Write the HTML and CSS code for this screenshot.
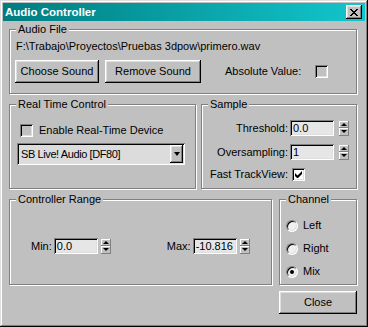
FILE: index.html
```html
<!DOCTYPE html>
<html lang="en">
<head>
    <meta charset="UTF-8">
    <title>Audio Controller</title>
    <link rel="stylesheet" href="styles.css">
</head>
<body>

    <div class="window">
        <div class="titlebar">
            <span class="title">Audio Controller</span>
            <div class="title-close">
                <svg width="8" height="7" viewBox="0 0 8 7"><path d="M0 0h2v1h1v1h2v-1h1v-1h2v1h-1v1h-1v1h-1v1h1v1h1v1h1v1h-2v-1h-1v-1h-2v1h-1v1h-2v-1h1v-1h1v-1h1v-1h-1v-1h-1v-1h-1z" fill="#000"/></svg>
            </div>
        </div>

        <div class="content">

            <div class="group audio">
                <div class="legend">Audio File</div>
                <div class="path">F:\Trabajo\Proyectos\Pruebas 3dpow\primero.wav</div>
                <div class="btn-row">
                    <div class="btn btn-choose">Choose Sound</div>
                    <div class="btn btn-remove">Remove Sound</div>
                    <span class="abs-label">Absolute Value:</span>
                    <span class="check disabled"></span>
                </div>
            </div>

            <div class="row-mid">
                <div class="group rtc">
                    <div class="legend">Real Time Control</div>
                    <div class="check-row">
                        <span class="check disabled"></span>
                        <span>Enable Real-Time Device</span>
                    </div>
                    <div class="select">
                        <span class="select-text">SB Live! Audio [DF80]</span>
                        <span class="select-arrow"><span class="tri-down"></span></span>
                    </div>
                </div>

                <div class="group sample">
                    <div class="legend">Sample</div>
                    <div class="form">
                        <span class="lbl">Threshold:</span>
                        <span class="field">0.0</span>
                        <span class="spin"><span class="spin-up"><span class="tri-up"></span></span><span class="spin-down"><span class="tri-down"></span></span></span>

                        <span class="lbl">Oversampling:</span>
                        <span class="field">1</span>
                        <span class="spin"><span class="spin-up"><span class="tri-up"></span></span><span class="spin-down"><span class="tri-down"></span></span></span>

                        <span class="lbl">Fast TrackView:</span>
                        <span class="check checked">
                            <svg width="9" height="9" viewBox="0 0 9 9"><path d="M1 3v3l2 2h1l4-4v-3l-4.5 4.5z" fill="#000"/></svg>
                        </span>
                    </div>
                </div>
            </div>

            <div class="row-bottom">
                <div class="group range">
                    <div class="legend">Controller Range</div>
                    <div class="range-row">
                        <span class="lbl-min">Min:</span>
                        <span class="field">0.0</span>
                        <span class="spin"><span class="spin-up"><span class="tri-up"></span></span><span class="spin-down"><span class="tri-down"></span></span></span>

                        <span class="lbl-max">Max:</span>
                        <span class="field">-10.816</span>
                        <span class="spin"><span class="spin-up"><span class="tri-up"></span></span><span class="spin-down"><span class="tri-down"></span></span></span>
                    </div>
                </div>

                <div class="side">
                    <div class="group channel">
                        <div class="legend">Channel</div>
                        <div class="radio-list">
                            <div class="radio-row"><span class="radio"></span><span>Left</span></div>
                            <div class="radio-row"><span class="radio"></span><span>Right</span></div>
                            <div class="radio-row"><span class="radio on"></span><span>Mix</span></div>
                        </div>
                    </div>
                    <div class="btn btn-close">Close</div>
                </div>
            </div>

        </div>
    </div>

</body>
</html>
```

FILE: styles.css
```css
*{
    box-sizing: border-box;
}
html, body{
    margin: 0;
    padding: 0;
    background: #c0c0c0;
}
body{
    font-family: 'Liberation Sans', Arial, sans-serif;
    font-size: 11px;
    line-height: 13px;
    color: #000;
}

.window{
    width: 368px;
    height: 327px;
    padding: 3px;
    background: #c0c0c0;
    box-shadow: inset -1px -1px 0 #000, inset 1px 1px 0 #dfdfdf, inset -2px -2px 0 #808080, inset 2px 2px 0 #fff;
}

/* title bar */
.titlebar{
    height: 18px;
    display: flex;
    align-items: center;
    justify-content: space-between;
    padding: 0 3px 0 2px;
    background: linear-gradient(to right, #007c80, #12c6cc);
}
.title{
    color: #fff;
    font-weight: bold;
    font-size: 11.5px;
}
.title-close{
    width: 16px;
    height: 14px;
    display: flex;
    align-items: center;
    justify-content: center;
    background: #c0c0c0;
    box-shadow: inset -1px -1px 0 #000, inset 1px 1px 0 #fff, inset -2px -2px 0 #808080, inset 2px 2px 0 #dfdfdf;
}

.content{
    padding: 8px 8px 0 6px;
}

/* group boxes */
.group{
    border: 1px solid #808080;
    box-shadow: 1px 1px 0 #fff, inset 1px 1px 0 #fff;
    padding: 0 5px;
}
.legend{
    display: table;
    margin: -7px 0 0 1px;
    padding: 0 2px;
    background: #c0c0c0;
}

.audio{
    height: 65px;
}
.path{
    margin: 4px 0 0 1px;
}
.btn-row{
    display: flex;
    align-items: center;
    margin-top: 7px;
}

.btn{
    height: 23px;
    display: flex;
    align-items: center;
    justify-content: center;
    background: #c0c0c0;
    box-shadow: inset -1px -1px 0 #000, inset 1px 1px 0 #fff, inset -2px -2px 0 #808080, inset 2px 2px 0 #dfdfdf;
}
.btn-choose{
    width: 84px;
}
.btn-remove{
    width: 96px;
    margin-left: 6px;
}
.abs-label{
    margin-left: 24px;
}
.btn-row .check{
    margin-left: 14px;
}

/* check boxes and fields */
.check{
    width: 13px;
    height: 13px;
    display: inline-flex;
    align-items: center;
    justify-content: center;
    background: #fff;
    box-shadow: inset 1px 1px 0 #808080, inset -1px -1px 0 #fff, inset 2px 2px 0 #000, inset -2px -2px 0 #dfdfdf;
}
.check.disabled{
    background: #c0c0c0;
}

.field{
    height: 16px;
    width: 44px;
    padding: 2px 0 0 3px;
    background: #e6e6e6;
    box-shadow: inset 1px 1px 0 #808080, inset -1px -1px 0 #fff, inset 2px 2px 0 #000, inset -2px -2px 0 #dfdfdf;
}

.spin{
    width: 10px;
    height: 15px;
    display: flex;
    flex-direction: column;
    margin-left: 3px;
}
.spin-up, .spin-down{
    height: 7px;
    display: flex;
    align-items: center;
    justify-content: center;
    background: #c0c0c0;
    box-shadow: inset -1px -1px 0 #808080, inset 1px 1px 0 #fff;
}
.spin-down{
    height: 8px;
}
.tri-up{
    border-left: 3px solid transparent;
    border-right: 3px solid transparent;
    border-bottom: 3px solid #000;
}
.tri-down{
    border-left: 3px solid transparent;
    border-right: 3px solid transparent;
    border-top: 3px solid #000;
}

/* middle row */
.row-mid{
    display: grid;
    grid-template-columns: 187px 156px;
    column-gap: 5px;
    margin-top: 10px;
}
.rtc, .sample{
    height: 85px;
}
.check-row{
    display: flex;
    align-items: center;
    gap: 6px;
    margin: 13px 0 0 5px;
}
.select{
    display: flex;
    align-items: center;
    justify-content: space-between;
    width: 168px;
    height: 22px;
    margin: 6px 0 0 2px;
    padding: 0 2px 0 4px;
    background: #dcdcdc;
    box-shadow: inset 1px 1px 0 #808080, inset -1px -1px 0 #fff, inset 2px 2px 0 #000, inset -2px -2px 0 #dfdfdf;
    letter-spacing: -0.4px;
}
.select-arrow{
    width: 13px;
    height: 18px;
    display: flex;
    align-items: center;
    justify-content: center;
    background: #c0c0c0;
    box-shadow: inset -1px -1px 0 #000, inset 1px 1px 0 #fff, inset -2px -2px 0 #808080, inset 2px 2px 0 #dfdfdf;
}
.select-arrow .tri-down{
    border-width: 4px 3px 0;
}

.form{
    display: grid;
    grid-template-columns: 81px 44px 13px;
    column-gap: 2px;
    row-gap: 8px;
    align-items: center;
    margin-top: 9px;
}
.lbl{
    text-align: right;
    white-space: nowrap;
}
.form .check{
    margin-left: 2px;
}

/* bottom row */
.row-bottom{
    display: grid;
    grid-template-columns: 263px 78px;
    column-gap: 7px;
    margin-top: 10px;
}
.range, .channel{
    height: 86px;
}
.range-row{
    display: flex;
    align-items: center;
    margin: 32px 0 0 16px;
}
.lbl-min{
    margin-right: 2px;
}
.lbl-max{
    margin: 0 2px 0 56px;
}

.radio-list{
    display: flex;
    flex-direction: column;
    gap: 10px;
    margin: 13px 0 0 1px;
}
.radio-row{
    display: flex;
    align-items: center;
    gap: 5px;
    height: 13px;
}
.radio{
    width: 12px;
    height: 12px;
    border-radius: 50%;
    display: flex;
    align-items: center;
    justify-content: center;
    border: 1px solid;
    border-color: #808080 #fff #fff #808080;
    background: #f0f0f0;
    box-shadow: inset 1px 1px 0 #000, inset -1px -1px 0 #dfdfdf;
}
.radio.on::after{
    content: '';
    width: 4px;
    height: 4px;
    border-radius: 50%;
    background: #000;
}

.btn-close{
    width: 78px;
    margin-top: 6px;
}
```
